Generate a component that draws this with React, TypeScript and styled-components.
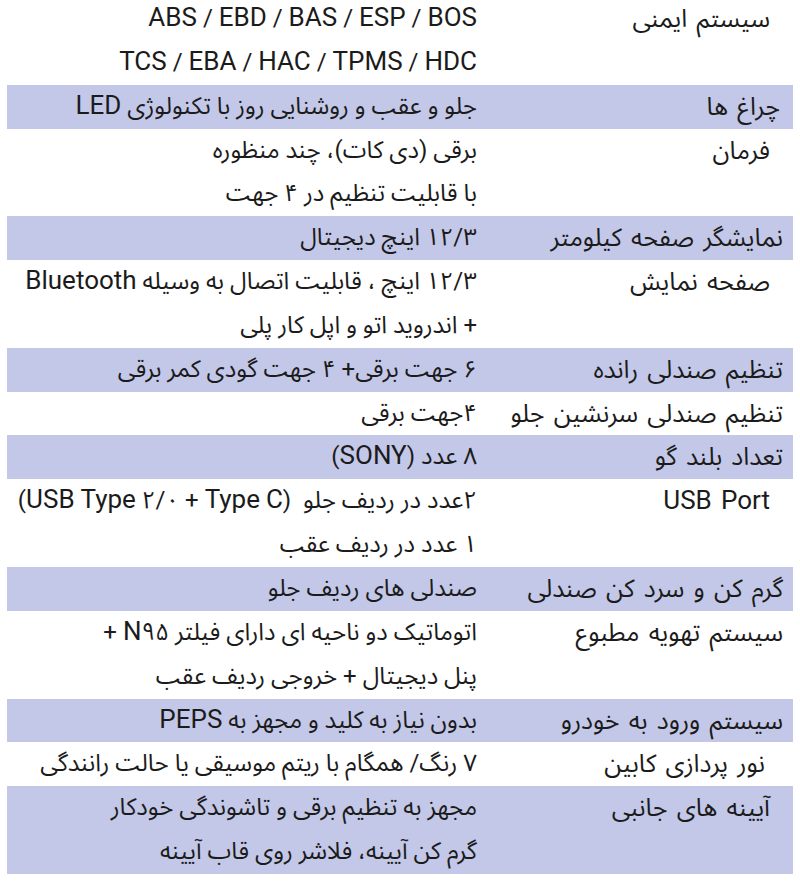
import React from 'react'
import styled, { createGlobalStyle } from 'styled-components'

const GlobalStyle = createGlobalStyle`
    html, body {
        margin: 0;
        padding: 0;
        background: #ffffff;
    }
    body {
        font-family: Roboto, "Noto Sans Arabic", "DejaVu Sans", sans-serif;
        color: #1b1b1b;
        overflow: hidden;
    }
`;

const SpecTable = styled.div`
    direction: rtl;
    margin: -3px 7px 0 7px;
    display: flex;
    flex-direction: column;
`;

const Row = styled.div<{ $shaded: boolean }>`
    display: grid;
    grid-template-columns: 310px 1fr;
    background-color: ${p => (p.$shaded ? '#c3c8e8' : 'transparent')};
`;

const Label = styled.div<{ $inset: number }>`
    padding-right: ${p => 10 + p.$inset}px;
    font-size: 25px;
    word-spacing: 3px;
    line-height: 43.85px;
    white-space: nowrap;
    text-align: right;
`;

const Values = styled.div`
    padding-right: 6px;
    font-size: 24px;
    line-height: 43.85px;
    text-align: right;
`;

const Line = styled.div`
    white-space: pre;
`;

// latin words are set a bit larger than the persian text around them
const Latin = styled.span`
    font-size: 26px;
    line-height: 1;
`;

type Spec = {
    label: string
    lines: string[]
    inset?: number
}

const specs: Spec[] = [
    { label: 'سیستم ایمنی', lines: ['ABS / EBD / BAS / ESP / BOS', 'TCS / EBA / HAC / TPMS / HDC'], inset: 13 },
    { label: 'چراغ ها', lines: ['جلو و عقب و روشنایی روز با تکنولوژی LED'], inset: 3 },
    { label: 'فرمان', lines: ['برقی (دی کات)، چند منظوره', 'با قابلیت تنظیم در ۴ جهت'], inset: 13 },
    { label: 'نمایشگر صفحه کیلومتر', lines: ['۱۲/۳ اینچ دیجیتال'] },
    { label: 'صفحه نمایش', lines: ['۱۲/۳ اینچ ، قابلیت اتصال به وسیله Bluetooth', '+ اندروید اتو و اپل کار پلی'], inset: 13 },
    { label: 'تنظیم صندلی رانده', lines: ['۶ جهت برقی+ ۴ جهت گودی کمر برقی'] },
    { label: 'تنظیم صندلی سرنشین جلو', lines: ['۴جهت برقی'] },
    { label: 'تعداد بلند گو', lines: ['۸ عدد (SONY)'] },
    { label: 'USB Port', lines: ['۲عدد در ردیف جلو  (USB Type ۲/۰ + Type C)', '۱ عدد در ردیف عقب'], inset: 13 },
    { label: 'گرم کن و سرد کن صندلی', lines: ['صندلی های ردیف جلو'] },
    { label: 'سیستم تهویه مطبوع', lines: ['اتوماتیک دو ناحیه ای دارای فیلتر N۹۵ +', 'پنل دیجیتال + خروجی ردیف عقب'] },
    { label: 'سیستم ورود به خودرو', lines: ['بدون نیاز به کلید و مجهز به PEPS'] },
    { label: 'نور پردازی کابین', lines: ['۷ رنگ/ همگام با ریتم موسیقی یا حالت رانندگی'], inset: 18 },
    { label: 'آیینه های جانبی', lines: ['مجهز به تنظیم برقی و تاشوندگی خودکار', 'گرم کن آیینه، فلاشر روی قاب آیینه'], inset: 13 },
]

function withLatin(text: string) {
    return text.split(/([A-Za-z]+)/).map((part, i) =>
        /^[A-Za-z]+$/.test(part) ? <Latin key={i}>{part}</Latin> : part
    );
}

function App() {
    return (
        <>
            <GlobalStyle />
            <SpecTable>
                {specs.map((s, i) => (
                    <Row key={s.label} $shaded={i % 2 === 1}>
                        <Label $inset={s.inset ?? 0}>{withLatin(s.label)}</Label>
                        <Values>
                            {s.lines.map(l => <Line key={l}>{withLatin(l)}</Line>)}
                        </Values>
                    </Row>
                ))}
            </SpecTable>
        </>
    );
}

export default App;
